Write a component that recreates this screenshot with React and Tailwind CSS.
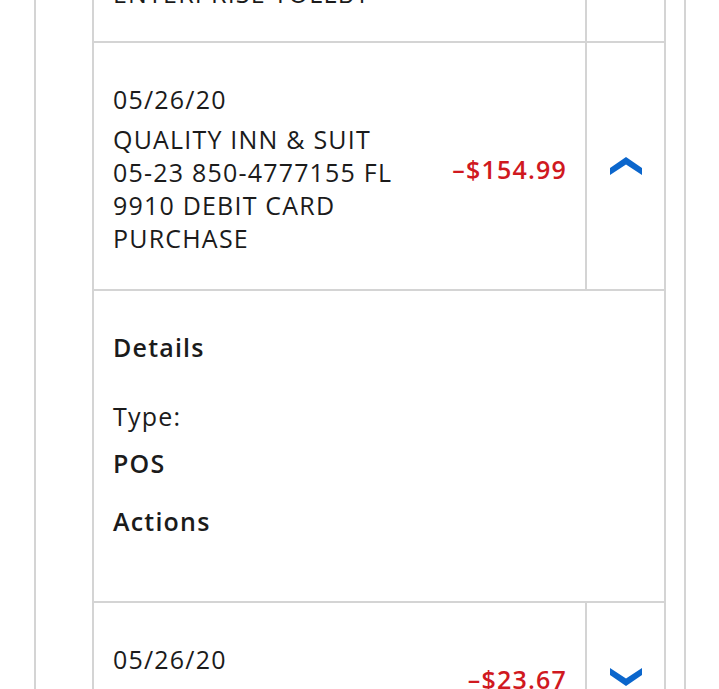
import React from "react";

function Chevron({ up }) {
  return (
    <svg width="32" height="18" viewBox="0 0 32 18" className="block">
      <polygon
        fill="#0b66cc"
        points={up ? "0,11 16,0 32,11 32,18 16,7.5 0,18" : "0,0 16,10.5 32,0 32,7 16,18 0,7"}
      />
    </svg>
  );
}

function TxRow({ date, lines, amount, open }) {
  return (
    <div className="flex border-t-2 border-[#d4d4d4]">
      <div className="flex flex-1 items-center justify-between pl-[19px] pr-[18px] pt-[40px] pb-[34px]">
        <div>
          <div className="mb-[7px]">{date}</div>
          {lines.map((l) => (
            <div key={l}>{l}</div>
          ))}
        </div>
        <div className="font-semibold text-[#d0191f]">{amount}</div>
      </div>
      <div className="flex w-[79px] items-center justify-center border-l-2 border-[#d4d4d4]">
        <Chevron up={open} />
      </div>
    </div>
  );
}

export default function App() {
  return (
    <div
      className="h-[689px] overflow-hidden bg-white text-[25px] leading-[33px] tracking-[1.2px] text-[#1b1b1b]"
      style={{ fontFamily: "'Open Sans', 'Liberation Sans', sans-serif" }}
    >
      <div className="ml-[34px] h-full w-[652px] border-x-2 border-[#d4d4d4]">
        <div className="ml-[56px] mr-[18px] border-x-2 border-[#d4d4d4]">
          {/* previous row, mostly scrolled off */}
          <div className="flex h-[41px] overflow-hidden">
            <div className="flex flex-1 flex-col justify-end pl-[19px] pb-[31px]">
              <div>ENTERPRISE TOLLBY</div>
            </div>
            <div className="w-[79px] border-l-2 border-[#d4d4d4]" />
          </div>

          <TxRow
            date="05/26/20"
            lines={["QUALITY INN & SUIT", "05-23 850-4777155 FL", "9910 DEBIT CARD", "PURCHASE"]}
            amount="–$154.99"
            open
          />

          {/* expanded details */}
          <div className="border-t-2 border-[#d4d4d4] pl-[19px] pt-[40px] pb-[63px]">
            <div className="mb-[36px] font-semibold">Details</div>
            <div className="mb-[14px]">Type:</div>
            <div className="mb-[25px] font-semibold">POS</div>
            <div className="font-semibold">Actions</div>
          </div>

          <TxRow date="05/26/20" lines={["RACETRAC 05-25"]} amount="–$23.67" />
        </div>
      </div>
    </div>
  );
}
